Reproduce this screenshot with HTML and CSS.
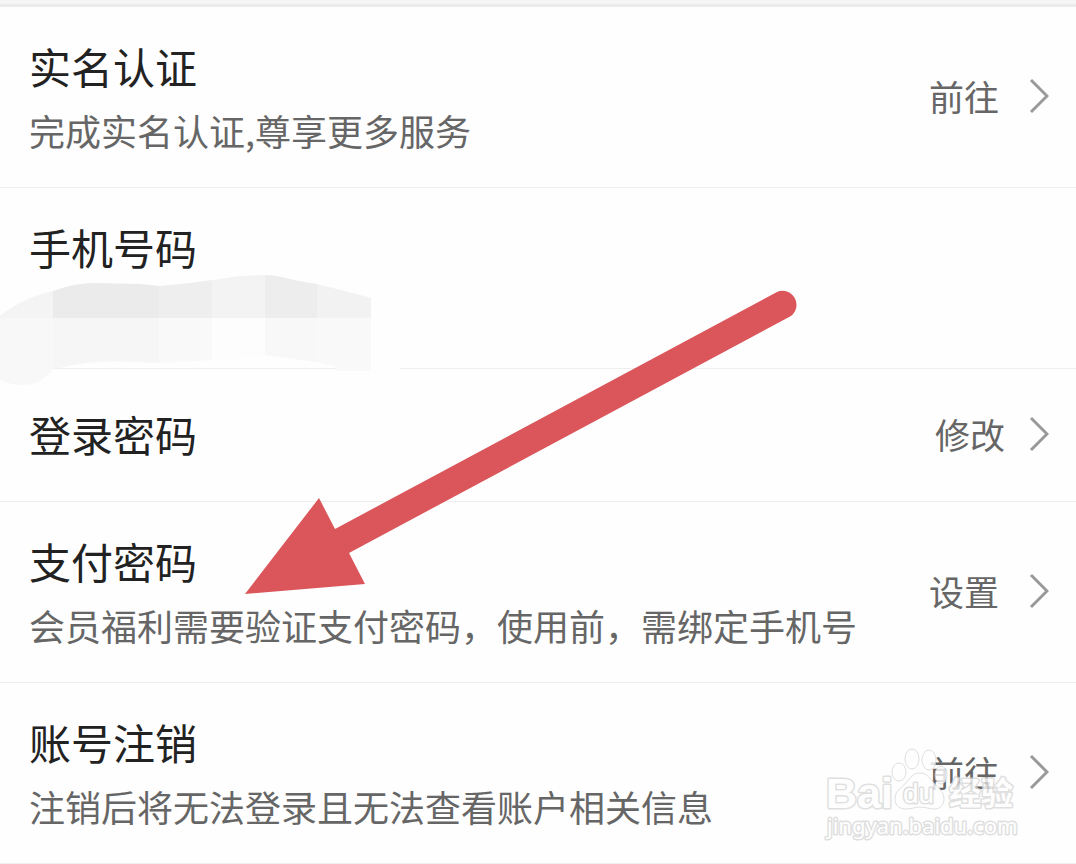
FILE: index.html
```html
<!DOCTYPE html>
<html lang="zh-CN">
<head>
    <meta charset="UTF-8">
    <meta name="viewport" content="width=device-width, initial-scale=1.0">
    <title>账号与安全</title>
    <link rel="stylesheet" href="styles.css">
</head>
<body>
    <main class="page">
        <div class="top-bar"></div>
        <ul class="settings">
            <li class="row">
                <div class="row-text">
                    <h2 class="title">实名认证</h2>
                    <p class="desc">完成实名认证,尊享更多服务</p>
                </div>
                <a class="action" href="#verify">
                    <span>前往</span>
                    <svg class="chevron" viewBox="0 0 20 36" aria-hidden="true"><path d="M2 2L18 18L2 34"/></svg>
                </a>
            </li>
            <li class="row row-phone">
                <div class="row-text">
                    <h2 class="title">手机号码</h2>
                </div>
                <!-- 号码打码 -->
                <svg class="mosaic" viewBox="0 0 416 112" aria-hidden="true">
                    <path fill="#f8f8f8" d="M0 42C18 28 36 21 53 17V95C43 107 35 111 22 111C12 111 6 108 0 106Z"/>
                    <path fill="#f4f4f4" d="M0 42C18 28 36 21 53 17V44H0Z"/>
                    <path fill="#ebebeb" d="M53 17C70 11 82 9 96 9L140 10L159 12V44H53Z"/>
                    <path fill="#eeeeee" d="M159 12L190 9L212 6V44H159Z"/>
                    <path fill="#f3f3f3" d="M212 6L240 2L265 1V44H212Z"/>
                    <path fill="#ededed" d="M265 1C278 1 290 6 317 10V44H265Z"/>
                    <path fill="#f2f2f2" d="M317 10L345 17L371 24V44H317Z"/>
                    <path fill="#f6f6f6" d="M53 44H159V89C120 87 90 86 65 93L53 95Z"/>
                    <path fill="#f9f9f9" d="M159 44H212V86L159 89Z"/>
                    <path fill="#fdfdfd" d="M212 44H265V82L212 86Z"/>
                    <path fill="#f8f8f8" d="M265 44H317V88L265 81Z"/>
                    <path fill="#f9f9f9" d="M317 44H371V97H336V93L317 88Z"/>
                    <path fill="#fefefe" d="M371 46H416V90H400V97H371Z"/>
                </svg>
            </li>
            <li class="row row-short">
                <div class="row-text">
                    <h2 class="title">登录密码</h2>
                </div>
                <a class="action" href="#login-password">
                    <span>修改</span>
                    <svg class="chevron" viewBox="0 0 20 36" aria-hidden="true"><path d="M2 2L18 18L2 34"/></svg>
                </a>
            </li>
            <li class="row">
                <div class="row-text">
                    <h2 class="title">支付密码</h2>
                    <p class="desc">会员福利需要验证支付密码，使用前，需绑定手机号</p>
                </div>
                <a class="action" href="#pay-password">
                    <span>设置</span>
                    <svg class="chevron" viewBox="0 0 20 36" aria-hidden="true"><path d="M2 2L18 18L2 34"/></svg>
                </a>
            </li>
            <li class="row">
                <div class="row-text">
                    <h2 class="title">账号注销</h2>
                    <p class="desc">注销后将无法登录且无法查看账户相关信息</p>
                </div>
                <a class="action" href="#close-account">
                    <span>前往</span>
                    <svg class="chevron" viewBox="0 0 20 36" aria-hidden="true"><path d="M2 2L18 18L2 34"/></svg>
                </a>
            </li>
        </ul>

        <svg class="arrow" viewBox="0 0 554 306" aria-hidden="true">
            <path d="M1 305L75 209L91 240L533 3A14 14 0 0 1 547 27L105 264L121 295Z"/>
        </svg>

        <svg class="watermark" viewBox="0 0 200 100" role="img" aria-label="Baidu经验">
            <g class="mark">
                <text class="mark-name" x="2" y="62">Bai</text>
                <ellipse cx="75" cy="26" rx="7" ry="9"/>
                <ellipse cx="88" cy="13" rx="7" ry="10"/>
                <ellipse cx="105" cy="14" rx="7" ry="10"/>
                <ellipse cx="117" cy="29" rx="6" ry="9"/>
                <path d="M96 27C89 27 86 32 82 37C77 42 71 45 71 53C71 60 76 63 82 63C88 63 91 61 96 61C102 61 105 63 110 63C116 63 120 59 120 53C120 45 114 42 109 36C105 31 102 27 96 27Z"/>
                <text class="mark-du" x="79" y="57">du</text>
                <text class="mark-cjk" x="125" y="59">经验</text>
                <text class="mark-url" x="3" y="88">jingyan.baidu.com</text>
            </g>
        </svg>
    </main>
</body>
</html>
```
FILE: styles.css
```css
* {
    box-sizing: border-box;
}

body {
    margin: 0;
    background: #fefefe;
    font-family: "Noto Sans CJK SC", sans-serif;
    color: #222;
}

.page {
    position: relative;
}

.top-bar {
    height: 7px;
    background: #f5f5f5;
    border-bottom: 3px solid #ebebeb;
}

.settings {
    list-style: none;
    margin: 0;
    padding: 0;
}

.row {
    position: relative;
    display: flex;
    justify-content: space-between;
    align-items: center;
    min-height: 181px;
    padding: 0 27px 2px 29px;
    border-bottom: 1px solid #eee;
}

.row-phone {
    align-items: flex-start;
    padding-top: 25px;
}

.row-short {
    min-height: 133px;
}

.title {
    margin: 0;
    font-size: 42px;
    line-height: 68px;
    font-weight: 400;
}

.desc {
    margin: 0;
    font-size: 36px;
    line-height: 60px;
    color: #666;
}

.action {
    display: flex;
    align-items: center;
    gap: 30px;
    font-size: 35px;
    line-height: 60px;
    color: #666;
    text-decoration: none;
}

.row-short .action {
    gap: 24px;
}

.chevron {
    width: 20px;
    height: 36px;
    fill: none;
    stroke: #999;
    stroke-width: 3;
}

.mosaic {
    position: absolute;
    left: 0;
    top: 86px;
    z-index: 1;
    width: 416px;
    height: 112px;
}

.arrow {
    position: absolute;
    left: 244px;
    top: 289px;
    z-index: 2;
    width: 554px;
    height: 306px;
    fill: #db565b;
}

.watermark {
    position: absolute;
    right: 52px;
    bottom: 18px;
    z-index: 2;
    width: 200px;
    height: 100px;
}

.mark {
    fill: #fff;
    stroke: #d8d8d8;
    stroke-width: 1;
    opacity: 0.8;
}

.mark text {
    paint-order: stroke;
    stroke-width: 3;
    stroke-linejoin: round;
}

.mark-name {
    font: 700 43px "Liberation Sans", sans-serif;
}

.mark-du {
    font: 400 28px "Liberation Sans", sans-serif;
}

.mark-cjk {
    font: 700 32px "Noto Sans CJK SC", sans-serif;
}

.mark-url {
    font: 400 22px "Noto Sans", sans-serif;
}
```
